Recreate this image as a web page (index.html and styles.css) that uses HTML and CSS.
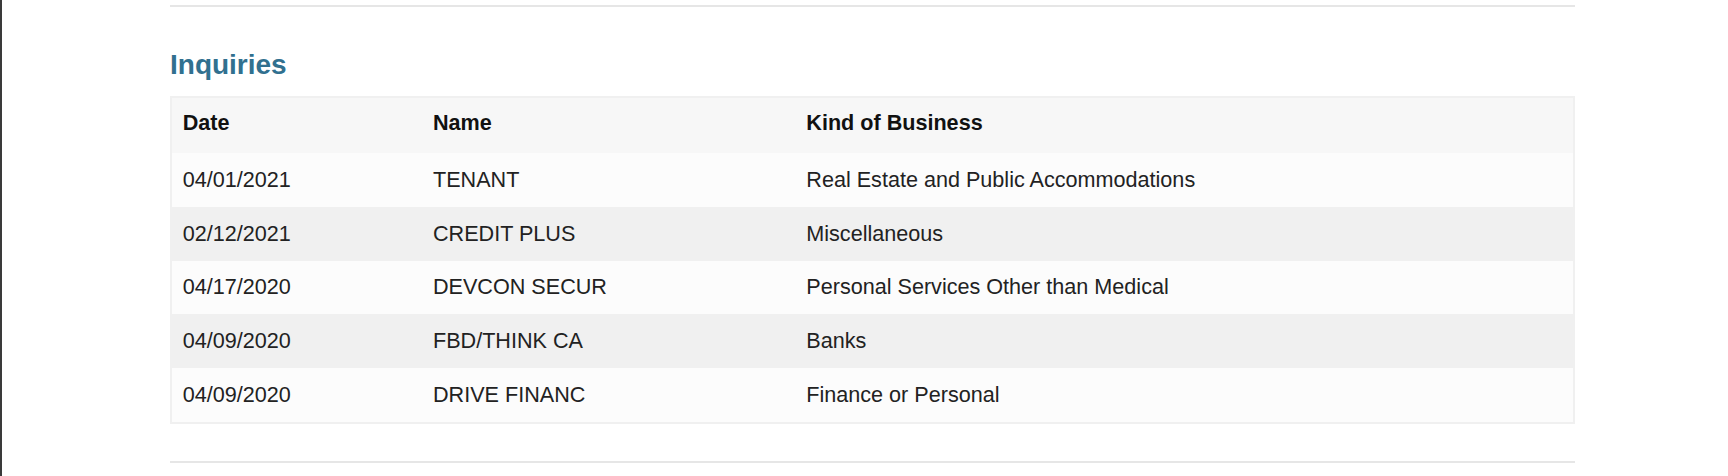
FILE: index.html
```html
<!DOCTYPE html>
<html lang="en">
<head>
<meta charset="utf-8">
<title>Inquiries</title>
<link rel="stylesheet" href="styles.css">
</head>
<body>
<div class="page">
  <div class="content">
    <hr class="rule">
    <h2 class="section-title">Inquiries</h2>
    <table class="inq-table">
      <thead>
        <tr>
          <th class="col-date">Date</th>
          <th class="col-name">Name</th>
          <th>Kind of Business</th>
        </tr>
      </thead>
      <tbody>
        <tr><td>04/01/2021</td><td>TENANT</td><td>Real Estate and Public Accommodations</td></tr>
        <tr><td>02/12/2021</td><td>CREDIT PLUS</td><td>Miscellaneous</td></tr>
        <tr><td>04/17/2020</td><td>DEVCON SECUR</td><td>Personal Services Other than Medical</td></tr>
        <tr><td>04/09/2020</td><td>FBD/THINK CA</td><td>Banks</td></tr>
        <tr><td>04/09/2020</td><td>DRIVE FINANC</td><td>Finance or Personal</td></tr>
      </tbody>
    </table>
    <hr class="rule rule-bottom">
  </div>
</div>
</body>
</html>
```

FILE: styles.css
```css
html, body {
  margin: 0;
  padding: 0;
  background: #ffffff;
}

body {
  font-family: "Liberation Sans", Arial, Helvetica, sans-serif;
  color: #222222;
  height: 476px;
  overflow: hidden;
}

.page {
  border-left: 2px solid #3a3a3a;
  min-height: 476px;
  box-sizing: border-box;
  padding-top: 5px;
}

.content {
  margin-left: 168px;
  width: 1405px;
}

.rule {
  border: 0;
  height: 2px;
  background: #e6e6e6;
  margin: 0;
}

.section-title {
  margin: 42px 0 15px 0;
  font-size: 28px;
  line-height: 32px;
  font-weight: bold;
  color: #31708f;
}

.inq-table {
  width: 100%;
  border-collapse: collapse;
  border: 2px solid #f0f0f0;
  font-size: 21.6px;
  line-height: 32px;
}

.inq-table th,
.inq-table td {
  text-align: left;
  padding: 10.9px 10.67px;
  vertical-align: top;
}

.inq-table th {
  font-weight: bold;
  color: #111111;
  background: #f7f7f7;
  padding-top: 9px;
  padding-bottom: 14px;
}

.col-date {
  width: 229px;
}

.col-name {
  width: 352px;
}

.inq-table tbody tr:nth-child(odd) td {
  background: #fcfcfc;
}

.inq-table tbody tr:nth-child(even) td {
  background: #f0f0f0;
}

.rule-bottom {
  margin-top: 37px;
}
```
